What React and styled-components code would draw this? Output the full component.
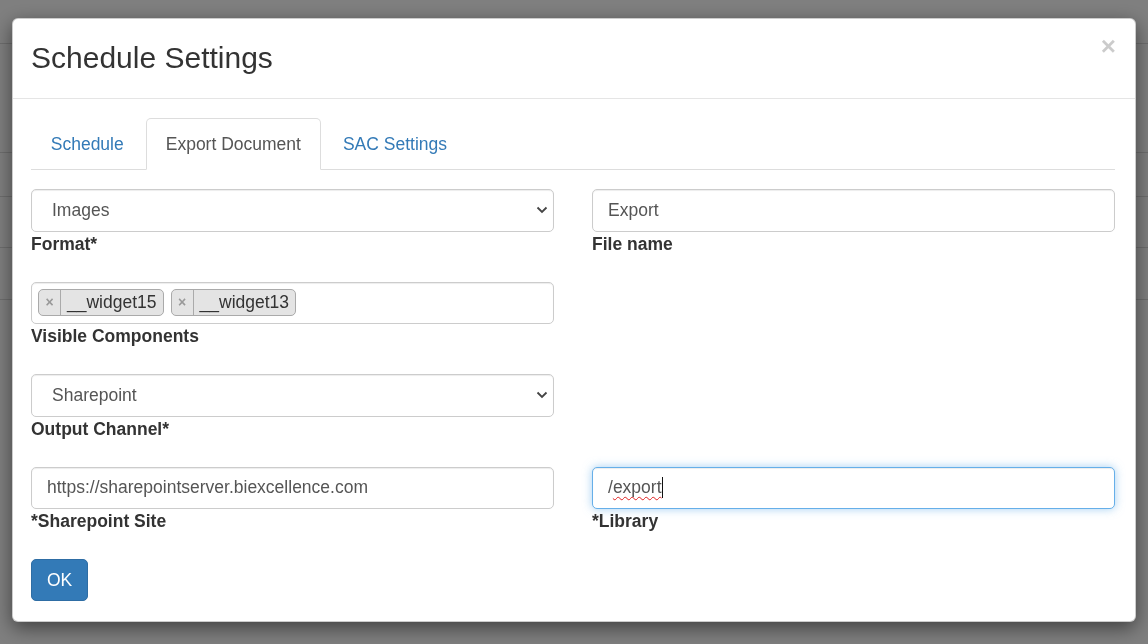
import React from "react";
import styled, { createGlobalStyle, css } from "styled-components";

const GlobalStyle = createGlobalStyle`
  html, body {
    margin: 0;
    padding: 0;
    overflow: hidden;
  }
  body {
    font-family: "Liberation Sans", Arial, Helvetica, sans-serif;
    font-size: 17.5px;
    line-height: 1.42857;
    color: #333;
    background: #fff;
  }
  * {
    box-sizing: border-box;
  }
`;

// page behind the backdrop ==============
const Page = styled.div`
  height: 644px;
  background: #fff;
`;

const BackRow = styled.div`
  height: ${({ h }) => h}px;
  border-bottom: 1px solid #dcdcdc;
`;

// modal ==================================
const Backdrop = styled.div`
  position: fixed;
  inset: 0;
  background: rgba(0, 0, 0, 0.5);
  padding: 18px 0 0 12px;
`;

const Modal = styled.div`
  width: 1124px;
  background: #fff;
  border: 1px solid rgba(0, 0, 0, 0.2);
  border-radius: 6px;
  box-shadow: 0 6px 19px rgba(0, 0, 0, 0.5);
`;

const Header = styled.div`
  display: flex;
  justify-content: space-between;
  align-items: flex-start;
  padding: 18px 18px 19px;
  border-bottom: 1px solid #e5e5e5;
`;

const Title = styled.h3`
  margin: 0;
  font-size: 30px;
  font-weight: 400;
  line-height: 42px;
  color: #333;
`;

const Close = styled.button`
  margin: -4px 1px 0 0;
  padding: 0;
  border: 0;
  background: none;
  font-family: inherit;
  font-size: 26px;
  font-weight: bold;
  line-height: 1;
  color: #000;
  opacity: 0.2;
  cursor: pointer;
`;

const Body = styled.div`
  padding: 19px 20px 20px 18px;
`;

const Tabs = styled.ul`
  display: flex;
  margin: 0;
  padding: 0;
  list-style: none;
  border-bottom: 1px solid #ddd;
`;

const Tab = styled.li`
  margin: 0 2.5px -1px 0;
  padding: 12.5px 18.75px;
  line-height: 25px;
  border: 1px solid transparent;
  border-radius: 5px 5px 0 0;
  color: #337ab7;
  cursor: pointer;

  ${({ active }) =>
    active &&
    css`
      color: #555;
      background: #fff;
      border-color: #ddd #ddd transparent;
    `}
`;

const Form = styled.div`
  display: grid;
  grid-template-columns: 1fr 1fr;
  column-gap: 38px;
  margin-top: 19px;
`;

const FormGroup = styled.div`
  margin-bottom: 18.75px;
`;

const Label = styled.label`
  display: block;
  margin-top: 0;
  margin-bottom: 6.25px;
  font-weight: bold;
  line-height: 25px;
  color: #333;
`;

const controlBase = css`
  display: block;
  width: 100%;
  height: 42.5px;
  padding: 7.5px 15px;
  font-family: inherit;
  font-size: 17.5px;
  line-height: 25px;
  color: #555;
  background: #fff;
  border: 1px solid #ccc;
  border-radius: 5px;
  box-shadow: inset 0 1px 1px rgba(0, 0, 0, 0.075);
  outline: none;

  ${({ focused }) =>
    focused &&
    css`
      border-color: #66afe9;
      box-shadow: inset 0 1px 1px rgba(0, 0, 0, 0.075),
        0 0 10px rgba(102, 175, 233, 0.6);
    `}
`;

const Input = styled.input`
  ${controlBase}
`;

const FakeInput = styled.div`
  ${controlBase}
  display: flex;
  align-items: center;
`;

const Misspelled = styled.span`
  text-decoration: underline wavy #e02020;
  text-decoration-thickness: 1px;
  text-underline-offset: 3px;
`;

const Caret = styled.span`
  display: inline-block;
  width: 1px;
  height: 21px;
  background: #111;
`;

const SelectWrap = styled.div`
  position: relative;
`;

const Select = styled.select`
  ${controlBase}
  appearance: none;
  padding-left: 20px;
`;

const Chevron = styled.svg`
  position: absolute;
  right: 6px;
  top: 17px;
  pointer-events: none;
`;

const TagBox = styled.div`
  ${controlBase}
  display: flex;
  align-items: flex-start;
  gap: 7px;
  padding: 6px;
`;

const Tag = styled.span`
  display: flex;
  height: 27px;
  background: #e4e4e4;
  border: 1px solid #aaa;
  border-radius: 5px;
  color: #333;
  line-height: 25px;
`;

const TagRemove = styled.span`
  width: 22px;
  border-right: 1px solid #aaa;
  text-align: center;
  color: #999;
  font-size: 14px;
  font-weight: bold;
`;

const TagText = styled.span`
  padding: 0 6px;
`;

const Button = styled.button`
  padding: 7.5px 15px;
  font-family: inherit;
  font-size: 17.5px;
  line-height: 25px;
  color: #fff;
  background: #337ab7;
  border: 1px solid #2e6da4;
  border-radius: 5px;
  cursor: pointer;
`;

function SelectField({ value, options }) {
  return (
    <SelectWrap>
      <Select defaultValue={value}>
        {options.map((o) => (
          <option key={o}>{o}</option>
        ))}
      </Select>
      <Chevron width="12" height="8" viewBox="0 0 12 8">
        <path d="M1.5 1.5 L6 6 L10.5 1.5" fill="none" stroke="#444" strokeWidth="1.8" />
      </Chevron>
    </SelectWrap>
  );
}

export default function App() {
  return (
    <>
      <GlobalStyle />
      <Page>
        <BackRow h={44} />
        <BackRow h={109} />
        <BackRow h={44} />
        <BackRow h={51} />
        <BackRow h={52} />
      </Page>
      <Backdrop>
        <Modal>
          <Header>
            <Title>Schedule Settings</Title>
            <Close>×</Close>
          </Header>
          <Body>
            <Tabs>
              <Tab>Schedule</Tab>
              <Tab active>Export Document</Tab>
              <Tab>SAC Settings</Tab>
            </Tabs>
            <Form>
              <FormGroup>
                <SelectField value="Images" options={["Images", "PDF", "PowerPoint"]} />
                <Label>Format*</Label>
              </FormGroup>
              <FormGroup>
                <Input defaultValue="Export" />
                <Label>File name</Label>
              </FormGroup>

              <FormGroup>
                <TagBox>
                  <Tag>
                    <TagRemove>×</TagRemove>
                    <TagText>__widget15</TagText>
                  </Tag>
                  <Tag>
                    <TagRemove>×</TagRemove>
                    <TagText>__widget13</TagText>
                  </Tag>
                </TagBox>
                <Label>Visible Components</Label>
              </FormGroup>
              <div />

              <FormGroup>
                <SelectField value="Sharepoint" options={["Sharepoint", "Email", "Folder"]} />
                <Label>Output Channel*</Label>
              </FormGroup>
              <div />

              <FormGroup>
                <Input defaultValue="https://sharepointserver.biexcellence.com" />
                <Label>*Sharepoint Site</Label>
              </FormGroup>
              <FormGroup>
                <FakeInput focused>
                  /<Misspelled>export</Misspelled>
                  <Caret />
                </FakeInput>
                <Label>*Library</Label>
              </FormGroup>
            </Form>
            <Button>OK</Button>
          </Body>
        </Modal>
      </Backdrop>
    </>
  );
}
